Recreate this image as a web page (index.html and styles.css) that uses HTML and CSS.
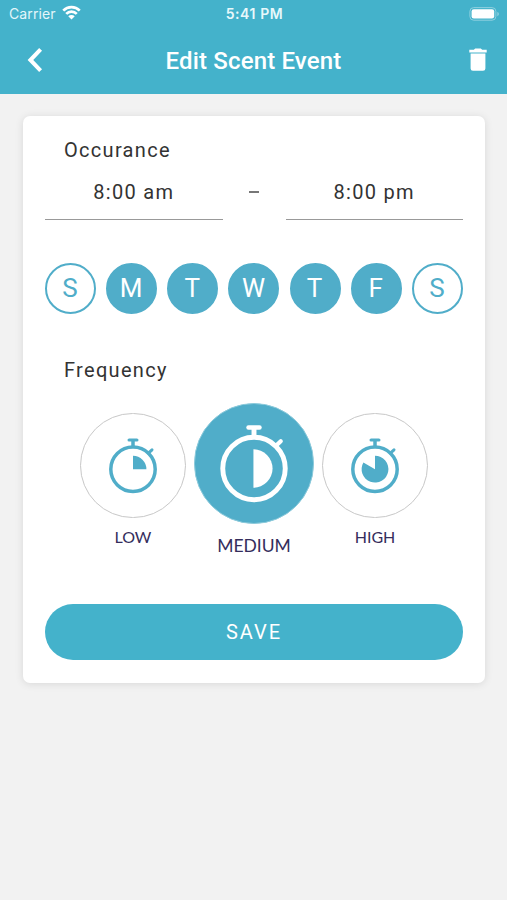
FILE: index.html
```html
<!DOCTYPE html>
<html lang="en">
<head>
	<meta charset="UTF-8">
	<title>Edit Scent Event</title>
	<link rel="stylesheet" href="styles.css">
</head>
<body>

	<header class="header">
		<div class="status">
			<div class="carrier">
				<span>Carrier</span>
				<svg class="wifi" viewBox="0 0 18 14">
					<path d="M1.2 5.2a11 11 0 0 1 15.6 0" />
					<path d="M4 8.3a7.1 7.1 0 0 1 10 0" />
					<path class="dot" d="M9 13.6L5.9 10.6a4.4 4.4 0 0 1 6.2 0z" />
				</svg>
			</div>
			<span class="clock">5:41 PM</span>
			<svg class="battery" viewBox="0 0 31 14">
				<rect class="shell" x=".9" y=".6" width="26" height="12.6" rx="3.8" />
				<rect class="charge" x="2.6" y="2.3" width="22.6" height="9.2" rx="2.2" />
				<path class="cap" d="M28.3 5v4.2c1-.3 1.6-1.1 1.6-2.1s-.6-1.8-1.6-2.1z" />
			</svg>
		</div>
		<div class="nav">
			<svg class="back" viewBox="0 0 16 26">
				<path d="M13.6 2.4L3.4 13l10.2 10.6" />
			</svg>
			<h1>Edit Scent Event</h1>
			<svg class="trash" viewBox="0 0 18 24">
				<path d="M1.6 5.6h14.8v14.8a2.4 2.4 0 0 1-2.4 2.4H4a2.4 2.4 0 0 1-2.4-2.4zM.3 1.8h4.5L6.2.5h5.6l1.4 1.3h4.5v2.6H.3z" />
			</svg>
		</div>
	</header>

	<main class="card">
		<h2>Occurance</h2>
		<div class="times">
			<div class="time">8:00 am</div>
			<span class="dash"></span>
			<div class="time">8:00 pm</div>
		</div>

		<ul class="days">
			<li>S</li>
			<li class="selected">M</li>
			<li class="selected">T</li>
			<li class="selected">W</li>
			<li class="selected">T</li>
			<li class="selected">F</li>
			<li>S</li>
		</ul>

		<h2>Frequency</h2>
		<ul class="levels">
			<li>
				<div class="circle">
					<svg class="watch" viewBox="-27 -37.2 54 68">
						<circle r="22.2" />
						<path d="M0-22v-7" />
						<path class="bar" d="M-3.9-29.2h7.8" />
						<path class="knob" d="M15.4-16l3.6-3.4" />
						<path class="pie" d="M0 0v-13.4a13.4 13.4 0 0 1 13.4 13.4z" />
					</svg>
				</div>
				<p>LOW</p>
			</li>
			<li class="selected">
				<div class="circle">
					<svg class="watch" viewBox="-27 -37.2 54 68">
						<circle r="22.2" />
						<path d="M0-22v-7" />
						<path class="bar" d="M-3.9-29.2h7.8" />
						<path class="knob" d="M15.4-16l3.6-3.4" />
						<path class="pie" d="M-.4-13.6a13.6 13.6 0 0 1 0 27.2z" />
					</svg>
				</div>
				<p>MEDIUM</p>
			</li>
			<li>
				<div class="circle">
					<svg class="watch" viewBox="-27 -37.2 54 68">
						<circle r="22.2" />
						<path d="M0-22v-7" />
						<path class="bar" d="M-3.9-29.2h7.8" />
						<path class="knob" d="M15.4-16l3.6-3.4" />
						<path class="pie" d="M0 0v-13.4a13.4 13.4 0 1 1-11.6 6.7z" />
					</svg>
				</div>
				<p>HIGH</p>
			</li>
		</ul>

		<button class="save">SAVE</button>
	</main>

</body>
</html>
```

FILE: styles.css
```css
*{
	margin: 0;
	padding: 0;
	box-sizing: border-box;
}
body{
	min-height: 900px;
	background: #f2f2f2;
	font-family: Roboto, "Liberation Sans", sans-serif;
	color: #333;
}
ul{
	list-style-type: none;
}
.header{
	height: 93.6px;
	background: #44b2cb;
	color: #fff;
}
.status{
	height: 27px;
	display: grid;
	grid-template-columns: 1fr auto 1fr;
	align-items: center;
	padding: 0 7px 0 9px;
	font-family: Inter, Roboto, sans-serif;
	font-size: 14px;
}
.carrier{
	display: flex;
	align-items: center;
	gap: 6px;
	letter-spacing: .1px;
	color: #e3f6fa;
}
.wifi{
	width: 19px;
	height: 15px;
	margin-top: -2px;
	fill: none;
	stroke: #fff;
	stroke-width: 2.6;
}
.wifi .dot{
	fill: #fff;
	stroke: none;
}
.clock{
	font-weight: 600;
	letter-spacing: .6px;
	color: #e8f8fb;
}
.battery{
	width: 31px;
	height: 14px;
	justify-self: end;
}
.battery .shell{
	fill: none;
	stroke: #8fd0df;
}
.battery .charge{
	fill: #fff;
}
.battery .cap{
	fill: #8fd0df;
}
.nav{
	height: 66px;
	display: grid;
	grid-template-columns: 1fr auto 1fr;
	align-items: center;
	padding: 0 20px;
}
.nav h1{
	padding-top: 2px;
	font-size: 24px;
	font-weight: 500;
	letter-spacing: .15px;
}
.back{
	width: 16px;
	height: 26px;
	margin-left: 7px;
	fill: none;
	stroke: #fff;
	stroke-width: 4;
}
.trash{
	width: 18px;
	height: 24px;
	justify-self: end;
	fill: #fff;
}
.card{
	width: 462px;
	height: 567.6px;
	margin: 22px 0 0 23px;
	padding: 22px;
	background: #fff;
	border-radius: 7px;
	box-shadow: 0 1px 8px rgba(0,0,0,.11);
}
.card h2{
	padding-left: 19px;
	line-height: 24px;
	font-size: 20px;
	font-weight: 400;
	letter-spacing: 1.3px;
}
.times{
	display: flex;
	justify-content: space-between;
	align-items: center;
	margin-top: 8px;
}
.time{
	width: 177.5px;
	height: 50px;
	line-height: 45px;
	border-bottom: 1px solid #999;
	font-size: 20px;
	letter-spacing: 1.3px;
	text-align: center;
}
.dash{
	width: 10px;
	height: 2px;
	margin-bottom: 6px;
	background: #777;
}
.days{
	display: flex;
	justify-content: space-between;
	margin: 43.5px 0 43.5px;
}
.days li{
	width: 51px;
	height: 51px;
	border: 2px solid #50adc9;
	border-radius: 50%;
	padding-right: 1px;
	line-height: 47px;
	font-size: 26px;
	text-align: center;
	color: #50adc9;
}
.days .selected{
	background: #50adc9;
	color: #fff;
}
.levels{
	display: flex;
	justify-content: center;
	gap: 8px;
	height: 160px;
	margin-top: 21.8px;
}
.levels li{
	width: 105.5px;
	padding-top: 9.5px;
}
.levels p{
	margin-top: 9px;
	line-height: 20px;
	font-family: Lato, sans-serif;
	font-size: 16px;
	text-align: center;
	color: #352d5c;
}
.circle{
	display: flex;
	justify-content: center;
	align-items: center;
	height: 105.5px;
	border: 1px solid #c8c8c8;
	border-radius: 50%;
}
.watch{
	width: 54px;
	height: 68px;
	fill: none;
	stroke: #50adc9;
	stroke-width: 3.5;
}
.watch .bar{
	stroke-linecap: round;
	stroke-width: 3.2;
}
.watch .knob{
	stroke-linecap: round;
	stroke-width: 3;
}
.watch .pie{
	fill: #50adc9;
	stroke: none;
}
.levels .selected{
	width: 120.5px;
	padding-top: 0;
}
.selected .circle{
	height: 120.5px;
	background: #50adc9;
	border-color: #8ccadb;
}
.selected .watch{
	width: 76px;
	height: 96px;
	stroke: #fff;
}
.selected .pie{
	fill: #fff;
}
.levels .selected p{
	margin-top: 11.5px;
	line-height: 22px;
	font-size: 17.5px;
}
.save{
	display: block;
	width: 100%;
	height: 56px;
	margin-top: 41px;
	border: none;
	border-radius: 28px;
	background: #44b2cb;
	color: #fff;
	font-family: inherit;
	font-size: 20px;
	letter-spacing: 2px;
}
```
